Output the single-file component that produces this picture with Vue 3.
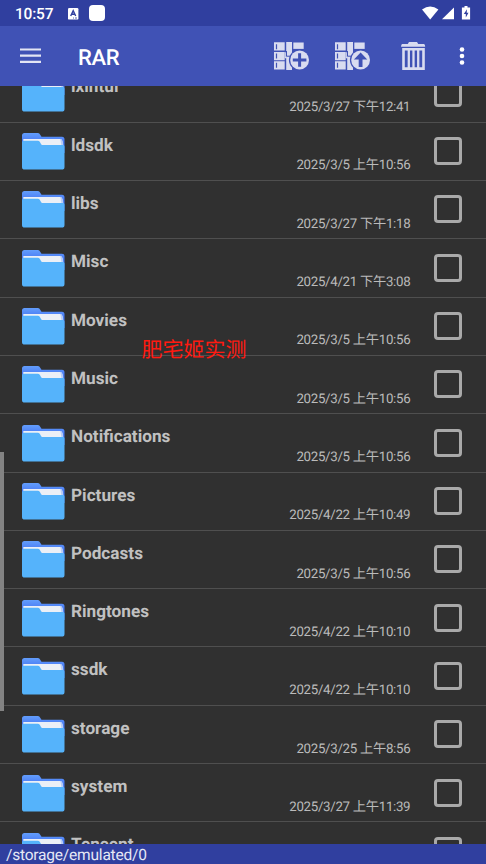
<script setup>
const rows = [
  ['ixintui', '2025/3/27 下午12:41'],
  ['ldsdk', '2025/3/5 上午10:56'],
  ['libs', '2025/3/27 下午1:18'],
  ['Misc', '2025/4/21 下午3:08'],
  ['Movies', '2025/3/5 上午10:56'],
  ['Music', '2025/3/5 上午10:56'],
  ['Notifications', '2025/3/5 上午10:56'],
  ['Pictures', '2025/4/22 上午10:49'],
  ['Podcasts', '2025/3/5 上午10:56'],
  ['Ringtones', '2025/4/22 上午10:10'],
  ['ssdk', '2025/4/22 上午10:10'],
  ['storage', '2025/3/25 上午8:56'],
  ['system', '2025/3/27 上午11:39'],
  ['Tencent', ''],
].map(([name, date]) => ({ name, date }))
</script>

<template>
  <div class="screen">
    <div class="status">
      <span class="clock">10:57</span>
      <svg class="badge-a" width="11" height="12" viewBox="0 0 11 12">
        <rect width="10.4" height="11.6" rx="1.2" fill="#fff" />
        <path d="M2.700 8 5.200 2.600 7.700 8M3.600 6.300h3.200" fill="none" stroke="#303f9f" stroke-width="1.400" />
        <path d="M5 10h1M7 10h2" stroke="#303f9f" stroke-width=".8" />
      </svg>
      <span class="blob"></span>
      <svg class="sys" width="50" height="16" viewBox="0 0 50 16">
        <path d="M0 3.400Q8.200-2.600 16.400 3.400L8.200 13.400Z" fill="#fff" />
        <path d="M32 1.400V13.300H20Z" fill="#fff" />
        <path d="M42.500 0h3v1.400h2.600V13.500h-8.200V1.400h2.600Z" fill="#fff" />
        <path d="M45 3.200 41.800 8h2v3.500L46.500 6.800h-1.800Z" fill="#303f9f" />
      </svg>
    </div>

    <header class="bar">
      <svg class="menu" width="21" height="16" viewBox="0 0 21 16">
        <path d="M0 1.500h21M0 7.700h21M0 13.800h21" stroke="#e3e5f4" stroke-width="2.200" />
      </svg>
      <h1>RAR</h1>
      <svg v-for="kind in ['add', 'extract']" :key="kind" class="archive" :class="kind" width="36" height="29" viewBox="0 0 36 29">
        <g fill="#d9dcf0">
          <path d="M0 .3h10.700v8.300H0zM0 10h10.700v8.300H0zM0 19.300h10.700v8.300H0z" />
          <path d="M12.200 0H18v28h-5.800z" />
          <path d="M19.300 .5h10.400v6.400H19.300z" />
        </g>
        <path d="M2.500 2.200v5M2.500 11.500v5M2.500 20.800v5" stroke="#4052b5" stroke-width="1.200" />
        <path d="M11.300 10.200v5.600h5" fill="none" stroke="#d9dcf0" stroke-width="1.100" />
        <path d="M12.500 9v5.200h5" fill="none" stroke="#4052b5" stroke-width="1" />
        <circle cx="25.600" cy="18" r="10.700" fill="#4052b5" />
        <circle cx="25.600" cy="18" r="9.400" fill="#d9dcf0" />
        <path v-if="kind === 'add'" d="M25.600 11.200v13.600M18.800 18h13.600" stroke="#4052b5" stroke-width="3" />
        <path v-else d="M25.600 10.600 32.300 17.600h-4.800V25h-3.800v-7.400H18.900Z" fill="#4052b5" />
      </svg>
      <svg class="trash" width="25" height="29" viewBox="0 0 25 29">
        <path d="M8 0h8l1.200 2H23q1 0 1.200 2.800H0Q.2 2 1.200 2h5.600Z" fill="#d9dcf0" />
        <path d="M2.500 7.300h20v19.300h-20Z" fill="none" stroke="#d9dcf0" stroke-width="2.600" />
        <path d="M7.800 7v19M12.500 7v19M17.200 7v19" stroke="#d9dcf0" stroke-width="2.300" />
      </svg>
      <svg class="more" width="6" height="20" viewBox="0 0 6 20">
        <g fill="#fff"><circle cx="3" cy="3.500" r="2.300" /><circle cx="3" cy="10" r="2.300" /><circle cx="3" cy="16.500" r="2.300" /></g>
      </svg>
    </header>

    <main class="list">
      <div class="rows">
        <div v-for="row in rows" :key="row.name" class="row">
          <svg class="folder" width="43" height="37" viewBox="0 0 43 37">
            <defs>
              <linearGradient id="tab" x1="0" y1="0" x2="0" y2="1">
                <stop offset="0" stop-color="#629dfb" />
                <stop offset=".4" stop-color="#4b7df5" />
              </linearGradient>
            </defs>
            <path d="M0 2.500Q0 0 2.500 0H16q1.500 0 2.200 1.700L19.500 3.800H40Q42.500 3.800 42.500 6.300V20H0Z" fill="url(#tab)" />
            <path d="M1.300 6H38q2 0 2.500 3l.8 5H1.300Z" fill="#ebeff6" />
            <path d="M38.300 6h.8q1.900 1 2.300 7l-2-1Z" fill="#b8cdf7" />
            <path d="M0 9.500Q0 7.700 1.800 7.700H16q1.500 0 2.200 1.800l.8 1.500q.3 1.100 1.500 1.100H41Q42.500 12.100 42.500 13.600V34q0 2.600-2.700 2.600H2.700Q0 36.600 0 34Z" fill="#55b3fb" />
          </svg>
          <span class="name">{{ row.name }}</span>
          <span class="date">{{ row.date }}</span>
          <span class="box"></span>
        </div>
      </div>
      <div class="thumb"></div>
      <div class="mark">肥宅姬实测</div>
    </main>

    <footer class="path">/storage/emulated/0</footer>
  </div>
</template>

<style>
body { margin: 0; background: #303030; }
</style>

<style scoped>
.screen {
  width: 486px;
  height: 864px;
  display: flex;
  flex-direction: column;
  overflow: hidden;
  background: #303030;
  font-family: Roboto, "Noto Sans CJK SC", sans-serif;
  text-rendering: geometricPrecision;
}
.status {
  height: 26px;
  flex: none;
  display: flex;
  align-items: center;
  box-sizing: border-box;
  padding: 0 15px;
  background: #303f9f;
  color: #fff;
}
.clock { width: 53px; font-size: 15.5px; font-weight: 500; letter-spacing: -0.2px; line-height: 26px; padding-top: 1px; }
.badge-a { margin-top: 1px; }
.blob { width: 16px; height: 16px; margin-left: 10px; border-radius: 4px; background: #fff; }
.sys { margin-left: auto; margin-right: -1px; margin-top: 1px; }
.bar {
  height: 60px;
  flex: none;
  display: flex;
  align-items: center;
  background: #4052b5;
}
.menu { margin-left: 20px; }
h1 {
  width: 196px;
  margin: 5px 0 0 37px;
  color: #fff;
  font-size: 22px;
  font-weight: 500;
  letter-spacing: -0.4px;
  line-height: 30px;
}
.archive { flex: none; }
.extract { margin-left: 25px; }
.trash { margin-left: 29.5px; }
.more { margin-left: 33.5px; }
.list {
  position: relative;
  height: 757.5px;
  flex: none;
  overflow: hidden;
}
.rows { margin-top: -21.8px; }
.row {
  display: grid;
  grid-template-columns: 43px 160px 179px 28px;
  box-sizing: border-box;
  height: 58.33px;
  padding-left: 22px;
  border-bottom: 1px solid #4f4f4f;
}
.folder { margin-top: 10.4px; }
.name {
  padding: 12px 0 0 6px;
  color: #c1c1c1;
  font-size: 17.2px;
  font-weight: 700;
  line-height: 22px;
}
.date {
  padding-top: 33.9px;
  width: 185.3px;
  color: #bbb;
  font-size: 13.3px;
  letter-spacing: -0.31px;
  line-height: 20px;
  text-align: right;
  white-space: nowrap;
}
.box {
  width: 28px;
  height: 28px;
  margin: 14.5px 0 0 30px;
  box-sizing: border-box;
  border: 3px solid #a9a9a9;
  border-radius: 4px;
}
.thumb {
  position: absolute;
  left: 0;
  top: 366px;
  width: 4px;
  height: 259px;
  background: #838383;
}
.mark {
  position: absolute;
  left: 141.5px;
  top: 248px;
  color: #ff1a10;
  font-family: "Noto Sans CJK SC", sans-serif;
  font-size: 21px;
  font-weight: 400;
  line-height: 30px;
}
.path {
  flex: 1;
  padding-left: 6px;
  background: #303f9f;
  color: #e6e8f5;
  font-size: 15.5px;
  letter-spacing: -0.2px;
  line-height: 22px;
}
</style>
